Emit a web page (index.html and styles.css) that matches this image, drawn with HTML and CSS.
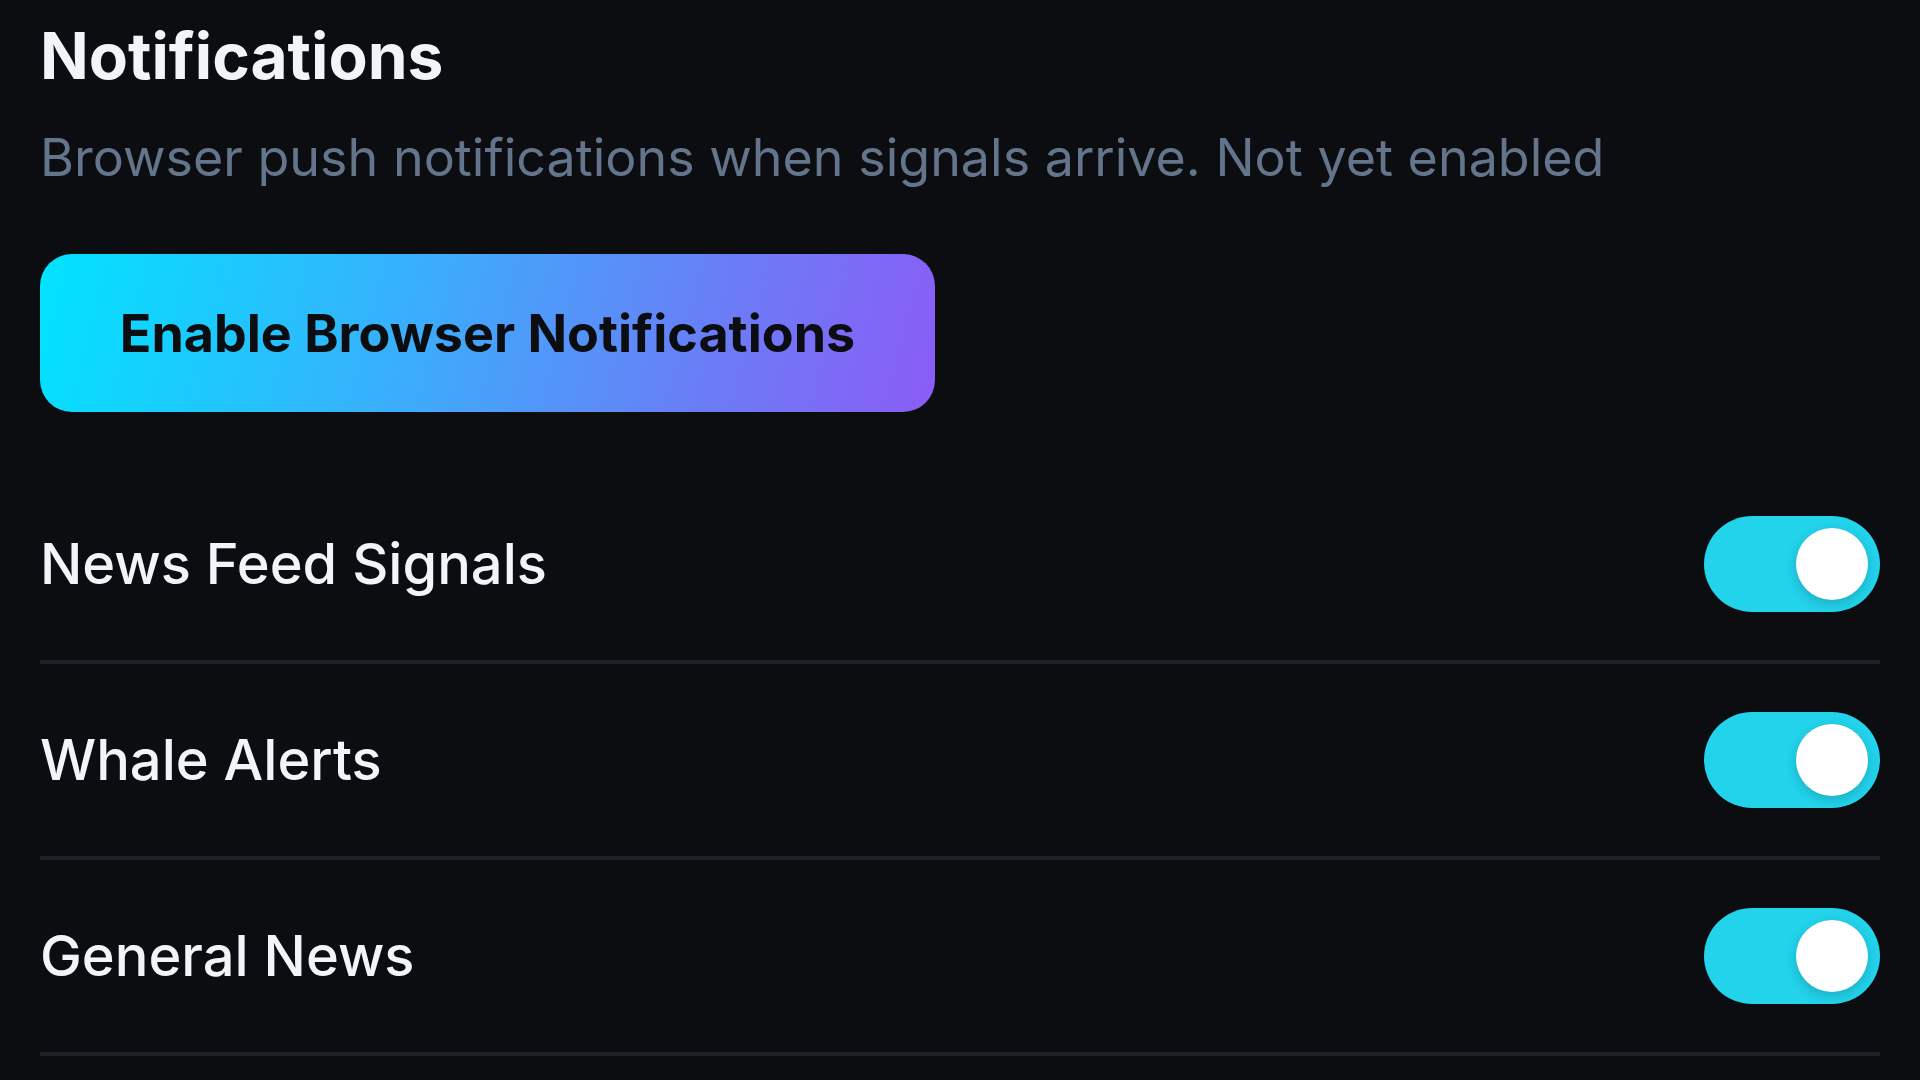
FILE: index.html
```html
<!DOCTYPE html>
<html lang="en">
<head>
<meta charset="utf-8">
<title>Notifications</title>
<link rel="stylesheet" href="styles.css">
</head>
<body>
<main class="page">
  <h1 class="title">Notifications</h1>
  <p class="subtitle">Browser push notifications when signals arrive. Not yet enabled</p>
  <button class="enable-btn" type="button">Enable Browser Notifications</button>
  <ul class="settings">
    <li class="row">
      <span class="label">News Feed Signals</span>
      <span class="toggle on"><span class="knob"></span></span>
    </li>
    <li class="row">
      <span class="label">Whale Alerts</span>
      <span class="toggle on"><span class="knob"></span></span>
    </li>
    <li class="row">
      <span class="label">General News</span>
      <span class="toggle on"><span class="knob"></span></span>
    </li>
  </ul>
</main>
</body>
</html>
```

FILE: styles.css
```css
* { box-sizing: border-box; }
html, body {
  margin: 0;
  padding: 0;
  background: #0b0d11;
  height: 100%;
  overflow: hidden;
}
body {
  font-family: Inter, "Noto Sans", sans-serif;
  color: #f1f5f9;
}
.page {
  padding: 16px 40px 0 40px;
  display: flex;
  flex-direction: column;
  align-items: flex-start;
}
.title {
  margin: 0;
  font-size: 64px;
  line-height: 80px;
  font-weight: 700;
  color: #f1f5f9;
}
.subtitle {
  margin: 26px 0 0 0;
  font-size: 52px;
  line-height: 72px;
  font-weight: 400;
  color: #64748b;
}
.enable-btn {
  margin-top: 60px;
  width: 895px;
  height: 158px;
  border: none;
  border-radius: 32px;
  background: linear-gradient(105deg, #00e4ff 0%, #38b0fc 40%, #6b7cf6 75%, #8b5cf6 100%);
  font-family: Inter, "Noto Sans", sans-serif;
  font-size: 52px;
  font-weight: 700;
  color: #0b0d11;
  padding: 0;
}
.settings {
  list-style: none;
  margin: 56px 0 0 0;
  padding: 0;
  width: 100%;
}
.row {
  display: flex;
  align-items: center;
  justify-content: space-between;
  padding: 48px 0;
  border-bottom: 4px solid #1f2127;
}
.label {
  font-size: 56px;
  font-weight: 500;
  color: #f1f5f9;
}
.toggle {
  position: relative;
  width: 176px;
  height: 96px;
  border-radius: 48px;
  background: #22d3eb;
  flex: none;
}
.knob {
  position: absolute;
  top: 12px;
  right: 12px;
  width: 72px;
  height: 72px;
  border-radius: 50%;
  background: #ffffff;
  box-shadow: 0 4px 12px rgba(0, 0, 0, 0.18);
}
```
